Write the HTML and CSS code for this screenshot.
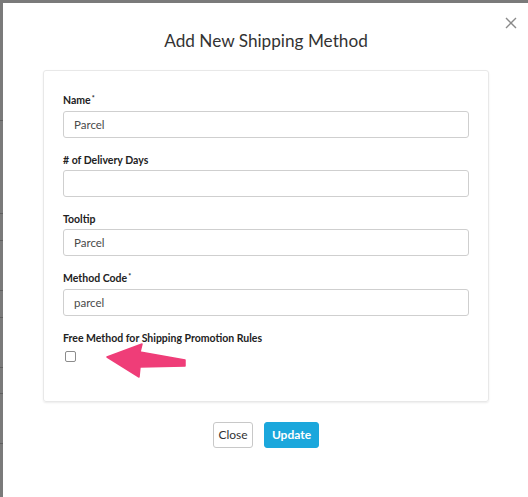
FILE: index.html
```html
<!DOCTYPE html>
<html>
<head>
<meta charset="utf-8">
<link rel="stylesheet" href="styles.css">
</head>
<body>
<div class="modal">
  <button class="close-x" aria-label="Close">
    <svg width="12" height="12" viewBox="0 0 12 12"><path d="M1 1L11 11M11 1L1 11" stroke="#8a8a8a" stroke-width="1.4" fill="none"/></svg>
  </button>
  <h1 class="title">Add New Shipping Method</h1>
  <div class="card">
    <div class="field">
      <label class="label">Name<sup>*</sup></label>
      <div class="input">Parcel</div>
    </div>
    <div class="field">
      <label class="label"># of Delivery Days</label>
      <div class="input"></div>
    </div>
    <div class="field">
      <label class="label">Tooltip</label>
      <div class="input">Parcel</div>
    </div>
    <div class="field">
      <label class="label">Method Code<sup>*</sup></label>
      <div class="input">parcel</div>
    </div>
    <div class="field last">
      <label class="label">Free Method for Shipping Promotion Rules</label>
      <span class="checkbox"></span>
    </div>
  </div>
  <div class="actions">
    <button class="btn btn-default">Close</button>
    <button class="btn btn-primary">Update</button>
  </div>
</div>
<svg class="arrow" width="528" height="497" viewBox="0 0 528 497">
  <path d="M107 357 L142 344 L140 352 L185 360 L185 366 L140 367 L139 377 Z" fill="#ef3d78" stroke="#ef3d78" stroke-width="1.5" stroke-linejoin="round"/>
</svg>
</body>
</html>
```

FILE: styles.css
```css
* { box-sizing: border-box; }
html, body { margin: 0; padding: 0; }
body {
  width: 528px;
  height: 497px;
  overflow: hidden;
  background-color: #7a7a7a;
  background-image:
    linear-gradient(#5f5f5f, #5f5f5f),
    linear-gradient(#5f5f5f, #5f5f5f),
    linear-gradient(#5f5f5f, #5f5f5f),
    linear-gradient(#5f5f5f, #5f5f5f),
    linear-gradient(#5f5f5f, #5f5f5f),
    linear-gradient(#5f5f5f, #5f5f5f),
    linear-gradient(#5f5f5f, #5f5f5f),
    linear-gradient(#5f5f5f, #5f5f5f);
  background-repeat: no-repeat;
  background-size: 3px 1px;
  background-position: 0 120px, 0 213px, 0 240px, 0 290px, 0 317px, 0 367px, 0 393px, 0 443px;
  font-family: Lato, "Liberation Sans", sans-serif;
  color: #333;
  position: relative;
}
.modal {
  margin: 3px 0 0 3px;
  height: 494px;
  background: #fff;
  position: relative;
  padding-top: 27px;
  display: flex;
  flex-direction: column;
}
.close-x {
  position: absolute;
  top: 14px;
  right: 11px;
  border: 0;
  background: none;
  padding: 0;
  width: 12px;
  height: 12px;
  line-height: 0;
}
.title {
  margin: 0;
  font-size: 17.2px;
  font-weight: 400;
  line-height: 22px;
  text-align: center;
  color: #333;
  padding-left: 1px;
}
.card {
  margin: 18px 39px 0 40px;
  border: 1px solid #e8e8e8;
  border-radius: 3px;
  box-shadow: 0 1px 2px rgba(0,0,0,0.08);
  padding: 22px 19px 39px 19px;
  display: flex;
  flex-direction: column;
  gap: 15px;
}
.field {
  display: flex;
  flex-direction: column;
}
.label {
  font-size: 10.5px;
  font-weight: 700;
  line-height: 14px;
  color: #222;
  margin-bottom: 3px;
}
.label sup {
  font-size: 7px;
  vertical-align: 0;
  position: relative;
  top: -3px;
  margin-left: 1px;
}
.input {
  height: 27px;
  border: 1px solid #cfcfcf;
  border-radius: 3px;
  padding: 0 10px;
  font-size: 11.5px;
  line-height: 25px;
  color: #4a4a4a;
}
.field.last .label { margin-bottom: 6px; }
.checkbox {
  display: block;
  width: 11px;
  height: 11px;
  border: 1px solid #8c8c8c;
  border-radius: 2px;
  margin-left: 2px;
  background: #fff;
}
.actions {
  margin-top: 20px;
  display: flex;
  justify-content: center;
  gap: 11px;
  padding-left: 1px;
}
.btn {
  height: 26px;
  font-family: Lato, "Liberation Sans", sans-serif;
  font-size: 12px;
  border-radius: 3px;
  padding: 0 10px;
  line-height: 24px;
}
.btn-default {
  background: #fff;
  border: 1px solid #c8c8c8;
  color: #333;
  width: 40px;
  padding: 0;
}
.btn-primary {
  background: #1ba7dc;
  border: 1px solid #1ba7dc;
  color: #fff;
  font-weight: 700;
  width: 55px;
  padding: 0;
}
.arrow {
  position: absolute;
  left: 0;
  top: 0;
  pointer-events: none;
}
```
